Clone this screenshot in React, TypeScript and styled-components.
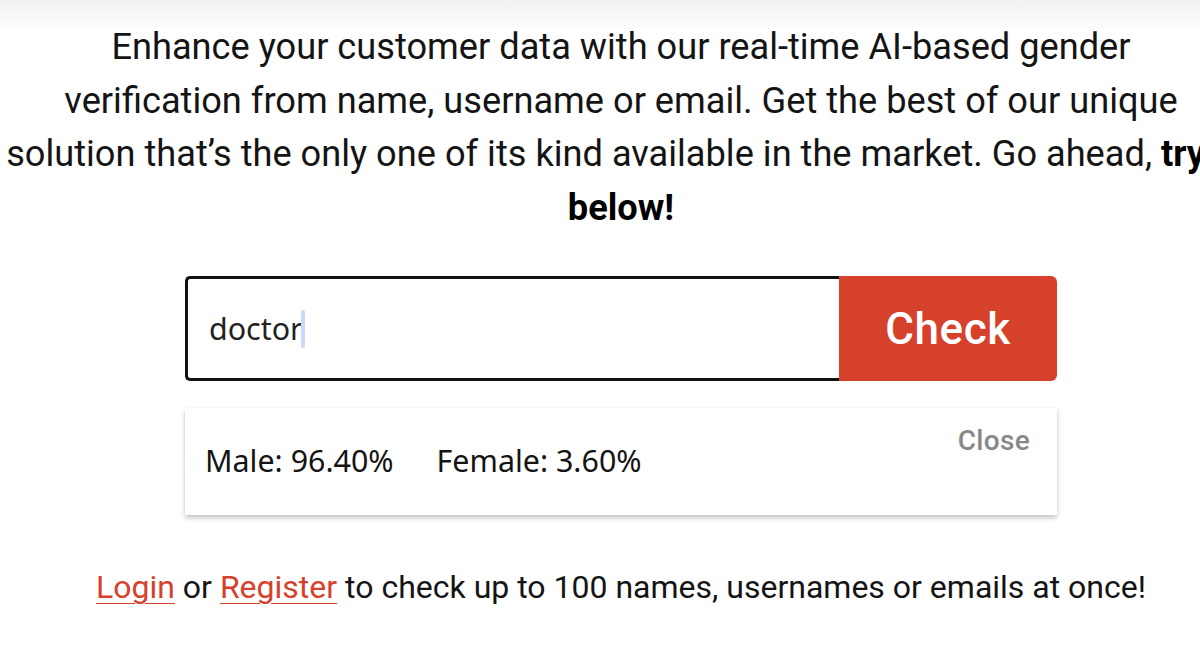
import React, { useState } from 'react'
import styled, { createGlobalStyle } from 'styled-components'

// --- Global ---
const GlobalStyle = createGlobalStyle`
  html, body {
    margin: 0;
    padding: 0;
    background: #FFFFFF;
    overflow: hidden;
  }
  body {
    font-family: Roboto, "Liberation Sans", Arial, sans-serif;
    color: #111111;
  }
`

// --- Styled Components ---
const Page = styled.main`
  width: 1242px;
  min-height: 671px;
  background: linear-gradient(to bottom, #F1F1F1 0px, #FFFFFF 34px);
  display: flex;
  flex-direction: column;
  align-items: center;
`

const Intro = styled.p`
  margin: 20px 0 0;
  font-size: 36.2px;
  line-height: 53.5px;
  text-align: center;
  white-space: nowrap;
  color: #141414;

  strong {
    font-weight: 700;
    color: #000000;
  }
`

const CheckForm = styled.form`
  margin-top: 42px;
  width: 872px;
  display: flex;
  height: 105px;
`

const NameField = styled.div`
  flex: 1;
  min-width: 0;
  box-sizing: border-box;
  border: 3px solid #111111;
  border-right: none;
  border-radius: 5px 0 0 5px;
  padding: 0 21px;
  display: flex;
  align-items: center;
  font-family: "Noto Sans", Roboto, sans-serif;
  font-size: 30.4px;
  color: #222222;
  background: #FFFFFF;
`

const Caret = styled.span`
  display: inline-block;
  width: 4px;
  height: 38px;
  margin-left: -2px;
  border-radius: 2px;
  background: #C9DAF8;
  vertical-align: middle;
`

const CheckButton = styled.button`
  width: 218px;
  border: none;
  border-radius: 0 6px 6px 0;
  background: #D6412C;
  color: #FFFFFF;
  font-family: Roboto, "Liberation Sans", Arial, sans-serif;
  font-size: 44px;
  font-weight: 500;
  letter-spacing: 0.6px;
  cursor: pointer;
`

const ResultCard = styled.section`
  margin-top: 27px;
  width: 872px;
  height: 107px;
  box-sizing: border-box;
  background: #FFFFFF;
  box-shadow: 0 3px 5px rgba(0, 0, 0, 0.22), 0 0 2px rgba(0, 0, 0, 0.06);
  display: flex;
  justify-content: space-between;
  padding: 16px 27px 0 20px;
`

const Scores = styled.div`
  display: flex;
  gap: 43px;
  padding-top: 16px;
  font-family: "Noto Sans", Roboto, sans-serif;
  font-size: 30.4px;
  color: #141414;
`

const CloseButton = styled.button`
  align-self: flex-start;
  background: none;
  border: none;
  padding: 0;
  font-family: Roboto, "Liberation Sans", Arial, sans-serif;
  font-size: 28px;
  font-weight: 500;
  letter-spacing: 0.3px;
  color: #888888;
  cursor: pointer;
`

const Footer = styled.p`
  margin: 51px 0 0;
  font-size: 32px;
  line-height: 42px;
  color: #141414;
  text-align: center;
`

const TextLink = styled.a`
  color: #D6412C;
  text-decoration: underline;
  text-underline-offset: 5px;
  text-decoration-thickness: 1px;
`

export default function App() {
  const [open, setOpen] = useState(true)

  return (
    <Page>
      <GlobalStyle />
      <Intro>
        Enhance your customer data with our real-time AI-based gender
        <br />
        verification from name, username or email. Get the best of our unique
        <br />
        solution that’s the only one of its kind available in the market. Go ahead, <strong>try it</strong>
        <br />
        <strong>below!</strong>
      </Intro>

      <CheckForm onSubmit={(e) => e.preventDefault()}>
        <NameField role="textbox" aria-label="Name, username or email">
          doctor<Caret />
        </NameField>
        <CheckButton type="submit">Check</CheckButton>
      </CheckForm>

      {open && (
        <ResultCard>
          <Scores>
            <span>Male: 96.40%</span>
            <span>Female: 3.60%</span>
          </Scores>
          <CloseButton onClick={() => setOpen(false)}>Close</CloseButton>
        </ResultCard>
      )}

      <Footer>
        <TextLink href="#">Login</TextLink> or <TextLink href="#">Register</TextLink> to check up to 100 names, usernames or emails at once!
      </Footer>
    </Page>
  )
}
